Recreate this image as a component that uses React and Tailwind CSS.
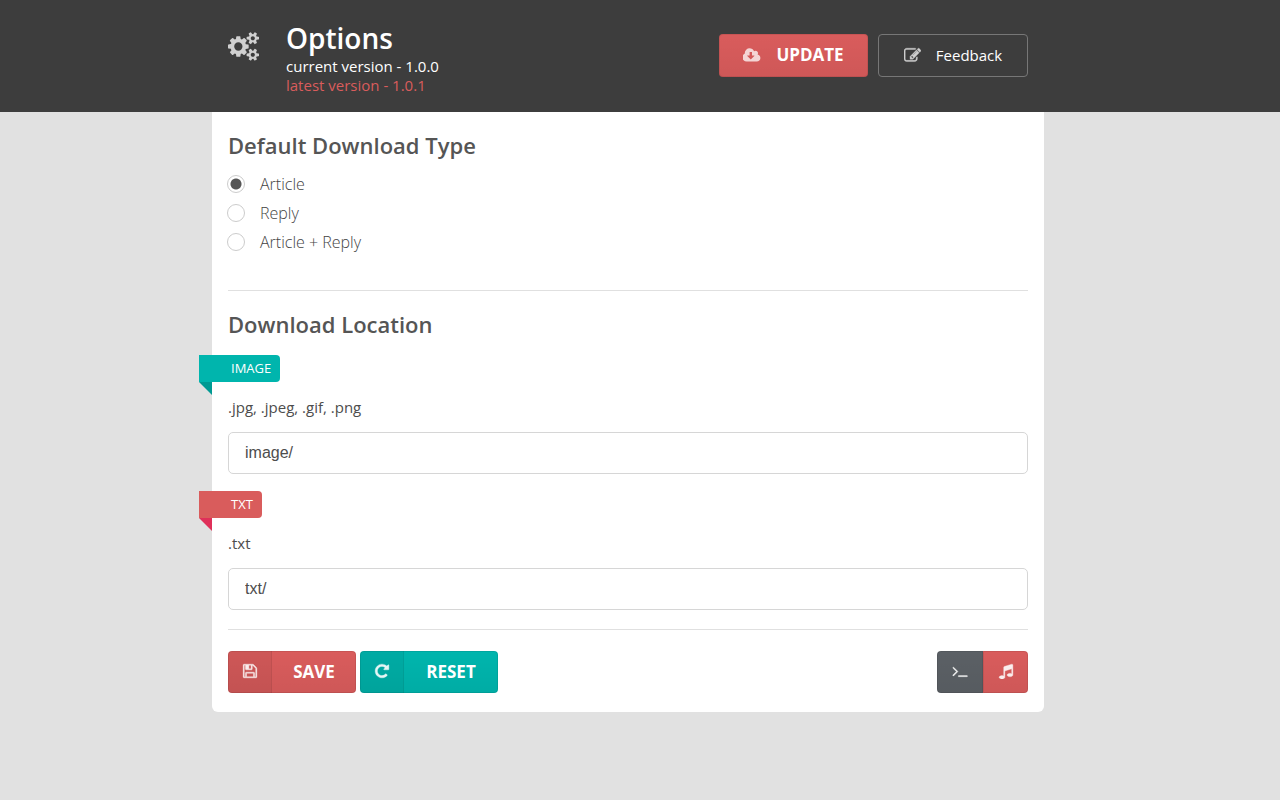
import React, { useState } from 'react';

const icons = {
  cogs: 'M896 896q0-106-75-181t-181-75-181 75-75 181 75 181 181 75 181-75 75-181zm768 512q0-52-38-90t-90-38-90 38-38 90q0 53 37.5 90.5t90.5 37.5 90.5-37.5 37.5-90.5zm0-1024q0-52-38-90t-90-38-90 38-38 90q0 53 37.5 90.5t90.5 37.5 90.5-37.5 37.5-90.5zm-384 421v185q0 10-7 19.5t-16 10.5l-155 24q-11 35-32 76 34 48 90 115 7 11 7 20 0 12-7 19-23 30-82.5 89.5t-78.5 59.5q-11 0-21-7l-115-90q-37 19-77 31-11 108-23 155-7 24-30 24h-186q-11 0-20-7.5t-10-17.5l-23-153q-34-10-75-31l-118 89q-7 7-20 7-11 0-21-8-144-133-144-160 0-9 7-19 10-14 41-53t47-61q-23-44-35-82l-152-24q-10-1-17-9.5t-7-19.5v-185q0-10 7-19.5t16-10.5l155-24q11-35 32-76-34-48-90-115-7-11-7-20 0-12 7-20 22-30 82-89t79-59q11 0 21 7l115 90q34-18 77-32 11-108 23-154 7-24 30-24h186q11 0 20 7.5t10 17.5l23 153q34 10 75 31l118-89q8-7 20-7 11 0 21 8 144 133 144 160 0 8-7 19-12 16-42 54t-45 60q23 48 34 82l152 23q10 2 17 10.5t7 19.5zm640 533v140q0 16-149 31-12 27-30 52 51 113 51 138 0 4-4 7-122 71-124 71-8 0-46-47t-52-68q-20 2-30 2t-30-2q-14 21-52 68t-46 47q-2 0-124-71-4-3-4-7 0-25 51-138-18-25-30-52-149-15-149-31v-140q0-16 149-31 13-29 30-52-51-113-51-138 0-4 4-7 4-2 35-20t59-34 30-16q8 0 46 46.5t52 67.5q20-2 30-2t30 2q51-71 92-112l6-2q4 0 124 70 4 3 4 7 0 25-51 138 17 23 30 52 149 15 149 31zm0-1024v140q0 16-149 31-12 27-30 52 51 113 51 138 0 4-4 7-122 71-124 71-8 0-46-47t-52-68q-20 2-30 2t-30-2q-14 21-52 68t-46 47q-2 0-124-71-4-3-4-7 0-25 51-138-18-25-30-52-149-15-149-31v-140q0-16 149-31 13-29 30-52-51-113-51-138 0-4 4-7 4-2 35-20t59-34 30-16q8 0 46 46.5t52 67.5q20-2 30-2t30 2q51-71 92-112l6-2q4 0 124 70 4 3 4 7 0 25-51 138 17 23 30 52 149 15 149 31z',
  cloud: 'M1216 928q0-14-9-23t-23-9h-224v-352q0-13-9.5-22.5t-22.5-9.5h-192q-13 0-22.5 9.5t-9.5 22.5v352h-224q-13 0-22.5 9.5t-9.5 22.5q0 14 9 23l352 352q9 9 23 9t23-9l351-351q10-12 10-24zm640 224q0 159-112.5 271.5t-271.5 112.5h-1088q-185 0-316.5-131.5t-131.5-316.5q0-130 70-240t188-165q-2-30-2-43 0-212 150-362t362-150q156 0 285.5 87t188.5 231q71-62 166-62 106 0 181 75t75 181q0 76-41 138 130 31 213.5 135.5t83.5 238.5z',
  edit: 'M888 1184l116-116-152-152-116 116v56h96v96h56zm440-720q-16-16-33 1l-350 350q-17 17-1 33t33-1l350-350q17-17 1-33zm80 594v190q0 119-84.5 203.5t-203.5 84.5h-832q-119 0-203.5-84.5t-84.5-203.5v-832q0-119 84.5-203.5t203.5-84.5h832q63 0 117 25 15 7 18 23 3 17-9 29l-49 49q-14 14-32 8-23-6-45-6h-832q-66 0-113 47t-47 113v832q0 66 47 113t113 47h832q66 0 113-47t47-113v-126q0-13 9-22l64-64q15-15 35-7t20 29zm-96-738l288 288-672 672h-288v-288zm444 132l-92 92-288-288 92-92q28-28 68-28t68 28l152 152q28 28 28 68t-28 68z',
  save: 'M512 1536h768v-384h-768v384zm896 0h128v-896q0-14-10-38.5t-20-34.5l-281-281q-10-10-34-20t-39-10v416q0 40-28 68t-68 28h-576q-40 0-68-28t-28-68v-416h-128v1280h128v-416q0-40 28-68t68-28h832q40 0 68 28t28 68v416zm-384-928v-320q0-13-9.5-22.5t-22.5-9.5h-192q-13 0-22.5 9.5t-9.5 22.5v320q0 13 9.5 22.5t22.5 9.5h192q13 0 22.5-9.5t9.5-22.5zm640 32v928q0 40-28 68t-68 28h-1344q-40 0-68-28t-28-68v-1344q0-40 28-68t68-28h928q40 0 88 20t76 48l280 280q28 28 48 76t20 88z',
  repeat: 'M1664 256v448q0 26-19 45t-45 19h-448q-42 0-59-40-17-39 14-69l138-138q-148-137-349-137-104 0-198.5 40.5t-163.5 109.5-109.5 163.5-40.5 198.5 40.5 198.5 109.5 163.5 163.5 109.5 198.5 40.5q119 0 225-52t179-147q7-10 23-12 15 0 25 9l137 138q9 8 9.5 20.5t-7.5 22.5q-109 132-264 204.5t-327 72.5q-156 0-298-61t-245-164-164-245-61-298 61-298 164-245 245-164 298-61q147 0 284.5 55.5t244.5 156.5l130-129q29-31 70-14 39 17 39 59z',
  terminal: 'M649 983l-466 466q-10 10-23 10t-23-10l-50-50q-10-10-10-23t10-23l393-393-393-393q-10-10-10-23t10-23l50-50q10-10 23-10t23 10l466 466q10 10 10 23t-10 23zm1079 457v64q0 14-9 23t-23 9h-960q-14 0-23-9t-9-23v-64q0-14 9-23t23-9h960q14 0 23 9t9 23z',
  music: 'M1664 224v1120q0 50-34 89t-86 60.5-103.5 32-96.5 10.5-96.5-10.5-103.5-32-86-60.5-34-89 34-89 86-60.5 103.5-32 96.5-10.5q105 0 192 39v-537l-768 237v709q0 50-34 89t-86 60.5-103.5 32-96.5 10.5-96.5-10.5-103.5-32-86-60.5-34-89 34-89 86-60.5 103.5-32 96.5-10.5q105 0 192 39v-967q0-31 19-56.5t49-35.5l832-256q12-4 28-4 40 0 68 28t28 68z',
};

const Icon = ({ name, width = 1792, stroke = 0, className }) => (
  <svg
    viewBox={`0 0 ${width} 1792`}
    fill="currentColor"
    stroke="currentColor"
    strokeWidth={stroke}
    aria-hidden="true"
    className={className}
  >
    <path d={icons[name]} />
  </svg>
);

const RED = 'bg-[#d95c5c] bg-linear-to-b from-transparent to-black/5 text-white shadow-[inset_0_0_0_1px_rgba(0,0,0,0.08)]';
const TEAL = 'bg-[#00b5ad] bg-linear-to-b from-transparent to-black/5 text-white shadow-[inset_0_0_0_1px_rgba(0,0,0,0.08)]';
const GREY = 'bg-[#5b6065] bg-linear-to-b from-transparent to-black/5 text-white shadow-[inset_0_0_0_1px_rgba(0,0,0,0.08)]';

const LabeledButton = ({ icon, color, width, children }) => (
  <button type="button" className={`flex h-[42px] overflow-hidden rounded text-[17px] font-bold ${color} ${width}`}>
    <span className="flex h-full w-11 items-center justify-center bg-black/5 pb-0.5 shadow-[inset_-1px_0_0_rgba(0,0,0,0.06)]">
      <Icon name={icon} stroke={40} className="size-4 opacity-90" />
    </span>
    <span className="flex h-full flex-1 items-center justify-center">{children}</span>
  </button>
);

const LocationField = ({ id, label, types, tag, fold, value, onChange }) => (
  <div>
    <div className="relative -ml-[29px] w-fit">
      <div className={`flex h-[27px] items-center rounded-r pr-[9px] pl-8 text-[13px] text-white ${tag}`}>{label}</div>
      <svg viewBox="0 0 13 13" className={`absolute top-full left-0 size-[13px] ${fold}`} fill="currentColor" aria-hidden="true">
        <path d="M0 0h13v13z" />
      </svg>
    </div>
    <label htmlFor={id} className="mt-[13px] block text-[15px] leading-6 text-[#4d4d4d]">{types}</label>
    <input
      id={id}
      type="text"
      value={value}
      onChange={onChange}
      className="mt-[13px] block h-[42px] w-full rounded-[5px] border border-[#d6d6d6] px-4 font-['Liberation_Sans',sans-serif] text-[#4d4d4d] outline-none"
    />
  </div>
);

const App = () => {
  const [type, setType] = useState('Article');
  const [imagePath, setImagePath] = useState('image/');
  const [txtPath, setTxtPath] = useState('txt/');

  return (
    <div className="min-h-screen bg-[#e1e1e1] font-['Open_Sans',sans-serif] text-base text-[#555]">
      <header className="bg-[#3d3d3d] pr-6">
        <div className="mx-auto flex h-28 max-w-[832px] items-start px-4">
          <Icon name="cogs" width={1920} className="mt-8 h-[29px] w-[31px] text-[#d0d0d0]" />
          <div className="ml-[27px] pt-5 text-white">
            <h1 className="text-[28px] leading-[37px] font-semibold">Options</h1>
            <p className="text-[15px] leading-[19px] font-medium">current version - 1.0.0</p>
            <p className="text-[15px] leading-[19px] font-medium text-[#d95c5c]">latest version - 1.0.1</p>
          </div>
          <div className="mt-[34px] ml-auto flex gap-[10px]">
            <button type="button" className={`flex h-[43px] w-[149px] items-center justify-center gap-[15px] rounded pb-px text-[17px] font-bold ${RED}`}>
              <Icon name="cloud" width={1920} className="h-[17px] w-[18px] opacity-75" />
              UPDATE
            </button>
            <button type="button" className="flex h-[43px] w-[150px] items-center justify-center gap-[15px] rounded border border-[#777] pb-px text-[15px] font-medium text-white">
              <Icon name="edit" stroke={40} className="size-[17px] opacity-75" />
              Feedback
            </button>
          </div>
        </div>
      </header>

      <div className="pr-6">
        <main className="mx-auto max-w-[832px] rounded-b-md bg-white px-4 pt-[17px] pb-[19px]">
          <section className="border-b border-[#e0e0e0] pb-[34px]">
            <h2 className="text-[22px] leading-8 font-semibold">Default Download Type</h2>
            <div className="mt-2">
              {['Article', 'Reply', 'Article + Reply'].map((item) => (
                <label key={item} className="-ml-px flex h-[29px] items-center font-light text-[#444]">
                  <input
                    type="radio"
                    name="type"
                    checked={type === item}
                    onChange={() => setType(item)}
                    className="mr-[15px] size-[18px] appearance-none rounded-full border border-[#ccc] bg-white checked:bg-[radial-gradient(circle,#555_5px,white_6px)]"
                  />
                  {item}
                </label>
              ))}
            </div>
          </section>

          <section className="border-b border-[#e0e0e0] pt-[17px] pb-[19px]">
            <h2 className="mb-[15px] text-[22px] leading-8 font-semibold">Download Location</h2>
            <div className="flex flex-col gap-[17px]">
              <LocationField
                id="image-path"
                label="IMAGE"
                types=".jpg, .jpeg, .gif, .png"
                tag="bg-[#00b5ad]"
                fold="text-[#009a93]"
                value={imagePath}
                onChange={(e) => setImagePath(e.target.value)}
              />
              <LocationField
                id="txt-path"
                label="TXT"
                types=".txt"
                tag="bg-[#d95c5c]"
                fold="text-[#df3059]"
                value={txtPath}
                onChange={(e) => setTxtPath(e.target.value)}
              />
            </div>
          </section>

          <div className="mt-[21px] flex gap-1">
            <LabeledButton icon="save" color={RED} width="w-32">SAVE</LabeledButton>
            <LabeledButton icon="repeat" color={TEAL} width="w-[138px]">RESET</LabeledButton>
            <div className="ml-auto flex">
              <button type="button" aria-label="Terminal" className={`flex h-[42px] w-[46px] items-center justify-center rounded-l pb-0.5 ${GREY}`}>
                <Icon name="terminal" stroke={40} className="size-4 opacity-90" />
              </button>
              <button type="button" aria-label="Music" className={`flex h-[42px] w-[45px] items-center justify-center rounded-r pb-0.5 ${RED}`}>
                <Icon name="music" stroke={40} className="size-4 opacity-90" />
              </button>
            </div>
          </div>
        </main>
      </div>
    </div>
  );
};

export default App;
